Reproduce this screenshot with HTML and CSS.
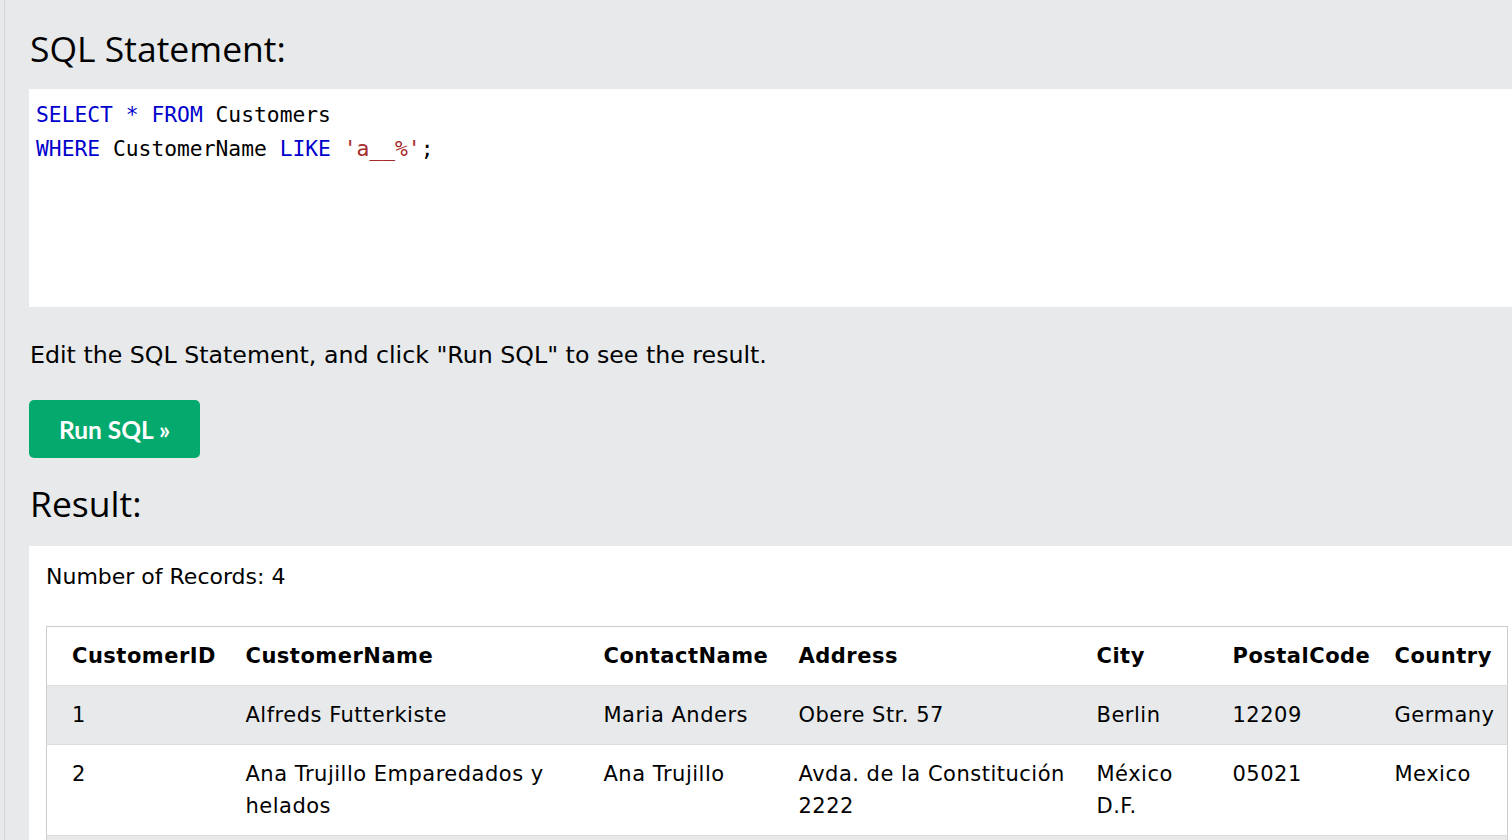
FILE: index.html
```html
<!DOCTYPE html>
<html>
<head>
<meta charset="utf-8">
<link rel="stylesheet" href="styles.css">
</head>
<body>
<div class="page">
  <h2 class="title">SQL Statement:</h2>
  <div class="code">
    <div class="line"><span class="kw">SELECT</span> <span class="kw">*</span> <span class="kw">FROM</span> Customers</div>
    <div class="line"><span class="kw">WHERE</span> CustomerName <span class="kw">LIKE</span> <span class="str">'a__%'</span>;</div>
  </div>
  <p class="hint">Edit the SQL Statement, and click "Run SQL" to see the result.</p>
  <button class="run">Run SQL »</button>
  <h2 class="title result-title">Result:</h2>
  <div class="result">
    <p class="count">Number of Records: 4</p>
    <table class="grid">
      <colgroup>
        <col class="c1"><col class="c2"><col class="c3"><col class="c4"><col class="c5"><col class="c6"><col class="c7">
      </colgroup>
      <tr><th>CustomerID</th><th>CustomerName</th><th>ContactName</th><th>Address</th><th>City</th><th>PostalCode</th><th>Country</th></tr>
      <tr class="alt"><td>1</td><td>Alfreds Futterkiste</td><td>Maria Anders</td><td>Obere Str. 57</td><td>Berlin</td><td>12209</td><td>Germany</td></tr>
      <tr><td>2</td><td>Ana Trujillo Emparedados y helados</td><td>Ana Trujillo</td><td>Avda. de la Constitución 2222</td><td>México D.F.</td><td>05021</td><td>Mexico</td></tr>
      <tr class="alt"><td>3</td><td>Antonio Moreno Taquería</td><td>Antonio Moreno</td><td>Mataderos 2312</td><td>México D.F.</td><td>05023</td><td>Mexico</td></tr>
    </table>
  </div>
</div>
</body>
</html>
```
FILE: styles.css
```css
html, body {
  margin: 0;
  padding: 0;
  background: #e7e9eb;
  overflow: hidden;
}
body {
  padding-left: 4px;
  font-family: "DejaVu Sans", Verdana, sans-serif;
  color: #000;
}
.page {
  border-left: 1px solid #d6d6d6;
  padding: 26px 0 0 24px;
  min-height: 840px;
  box-sizing: border-box;
}
.title {
  font-family: "Open Sans", "Noto Sans", sans-serif;
  font-weight: 400;
  font-size: 35.5px;
  line-height: 44px;
  margin: 0 0 19px 1px;
}
.code {
  background: #fff;
  height: 218px;
  box-sizing: border-box;
  padding: 9px 0 0 7px;
  font-family: "DejaVu Sans Mono", "Liberation Mono", monospace;
  font-size: 21.3px;
}
.line {
  line-height: 34px;
  white-space: pre;
}
.kw { color: #0000cd; }
.str { color: #a52a2a; }
.hint {
  font-size: 23.7px;
  line-height: 34px;
  margin: 31px 0 0 1px;
}
.run {
  display: block;
  margin-top: 28px;
  width: 171px;
  height: 58px;
  border: none;
  border-radius: 5px;
  background: #04aa6d;
  color: #fff;
  font-family: "Lato", "Open Sans", sans-serif;
  font-weight: 700;
  font-size: 24.5px;
  padding: 0;
}
.result-title {
  margin-top: 23px;
  margin-bottom: 21px;
}
.result {
  background: #fff;
  padding: 16px 0 0 17px;
  min-height: 400px;
}
.count {
  font-size: 22px;
  line-height: 30px;
  margin: 0 0 34px 0;
}
.grid {
  border-collapse: collapse;
  border: 1px solid #ccc;
  width: 1461px;
  table-layout: fixed;
  font-size: 21px;
  letter-spacing: 0.5px;
}
.c1 { width: 186px; }
.c2 { width: 358px; }
.c3 { width: 195px; }
.c4 { width: 298px; }
.c5 { width: 136px; }
.c6 { width: 162px; }
.c7 { width: 126px; }
.grid th, .grid td {
  text-align: left;
  vertical-align: top;
  padding: 13px 8px 13px 13px;
  line-height: 32px;
  border-bottom: 1px solid #ddd;
}
.grid th:first-child, .grid td:first-child {
  padding-left: 25px;
}
.grid th { font-weight: 700; }
.grid tr.alt { background: #e7e9eb; }
```
